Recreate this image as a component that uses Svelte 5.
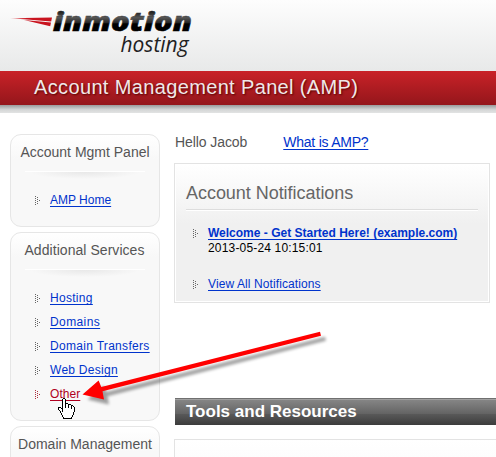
<script>
  const services = [
    { name: 'Hosting', track: 0.3 },
    { name: 'Domains', track: 0.4 },
    { name: 'Domain Transfers', track: 0.31 },
    { name: 'Web Design', track: 0.27 },
    { name: 'Other', track: 0.05 }
  ];
  const dots = [[0,0],[0,2],[0,4],[0,6],[0,8],[2,1],[2,3],[2,5],[2,7],[4,4]];

  // Hand pointer bitmap: X is outline, o is fill.
  const hand = [
    '.....XX..........',
    '....XooX.........',
    '....XooX.........',
    '....XooX.........',
    '....XooX.........',
    '....XooXXX.......',
    '....XooXooXXX....',
    '....XooXooXooXX..',
    '....XooXooXooXoX.',
    'XXX.XooXooXooXooX',
    'XooXXooooooooXooX',
    'XoooXoooooooooooX',
    '.XooXoooooooooooX',
    '..XoXoooooooooooX',
    '..XooooooooooooX.',
    '...XoooooooooooX.',
    '...XoooooooooooX.',
    '....XoooooooooX..',
    '....XoooooooooX..',
    '.....XoooooooX...',
    '.....XXXXXXXXX...'
  ];
  const pixels = hand.flatMap((row, y) => [...row].map((c, x) => ({ c, x, y }))).filter((p) => p.c !== '.');
</script>

{#snippet bullet(red)}
  <svg class="bullet" class:red width="5" height="9" viewBox="0 0 5 9" shape-rendering="crispEdges">
    {#each dots as [x, y]}<rect {x} {y} width="1" height="1" />{/each}
  </svg>
{/snippet}

<div class="page">
  <header>
    <svg class="logo" width="210" height="71" viewBox="0 0 210 71">
      <defs>
        <linearGradient id="ink" gradientUnits="userSpaceOnUse" x1="0" y1="10" x2="0" y2="32">
          <stop offset="0" stop-color="#111" /><stop offset=".35" stop-color="#555" />
          <stop offset=".6" stop-color="#222" /><stop offset=".62" stop-color="#000" />
        </linearGradient>
        <linearGradient id="streak" x1="0" x2="1" y1="0" y2="0">
          <stop offset="0" stop-color="#d9232b" stop-opacity=".35" /><stop offset=".4" stop-color="#c9141f" />
        </linearGradient>
      </defs>
      <path d="M10 18.2 52 17.6 51.2 21.4 27 19.6Z M24 20 51 22.6 50.2 26.2Z" fill="url(#streak)" />
      <text class="brand" x="53" y="31" textLength="139" lengthAdjust="spacingAndGlyphs">inmotion</text>
      <text class="sub" x="120.5" y="52" textLength="68" lengthAdjust="spacingAndGlyphs">hosting</text>
    </svg>
    <h1>Account Management Panel (AMP)</h1>
    <div class="shade"></div>
  </header>

  <div class="body">
    <nav>
      <section class="first">
        <h2>Account Mgmt Panel</h2>
        <div class="rule"></div>
        <ul><li>{@render bullet(false)}<a href="#home">AMP Home</a></li></ul>
      </section>
      <section class="second">
        <h2 class="nudge">Additional Services</h2>
        <div class="rule"></div>
        <ul>
          {#each services as { name, track }}
            <li>{@render bullet(name === 'Other')}<a href="#service" class:active={name === 'Other'} style:letter-spacing="{track}px">{name}</a></li>
          {/each}
        </ul>
      </section>
      <section class="third"><h2>Domain Management</h2></section>
    </nav>

    <main>
      <div class="hello"><span>Hello Jacob</span><a href="#amp">What is AMP?</a></div>
      <div class="panel">
        <h3>Account Notifications</h3>
        <div class="line"></div>
        <div class="note">
          {@render bullet(false)}
          <div><a class="bold" href="#welcome">Welcome - Get Started Here! (example.com)</a><div class="date">2013-05-24 10:15:01</div></div>
        </div>
        <div class="note all">{@render bullet(false)}<a href="#all">View All Notifications</a></div>
      </div>
      <h4>Tools and Resources</h4>
      <div class="tools"></div>
    </main>
  </div>

  <svg class="overlay" width="496" height="457" viewBox="0 0 496 457">
    <defs>
      <filter id="soft" x="-10%" y="-10%" width="120%" height="130%"><feGaussianBlur stdDeviation="1.4" /></filter>
      <path id="arrow" d="M320 331.7 321 335.7 102.5 391.2 104 399.4 82.5 394.5 98.6 380.4 101.3 387Z" />
    </defs>
    <use href="#arrow" x="5" y="5" fill="#000" opacity=".36" filter="url(#soft)" />
    <use href="#arrow" fill="red" />
    <g transform="translate(58 398)" shape-rendering="crispEdges">
      {#each pixels as { c, x, y }}<rect {x} {y} width="1" height="1" fill={c === 'X' ? '#000' : '#fff'} />{/each}
    </g>
  </svg>
</div>

<style>
  :global(body) { margin: 0; background: #fff; }
  .page { position: relative; width: 496px; height: 457px; overflow: hidden; font: 12px/14px "Liberation Sans", Arial, sans-serif; color: #000; }
  h1, h2, h3, h4, ul { margin: 0; padding: 0; font-weight: normal; }
  header { height: 113px; background: linear-gradient(#fdfdfd, #e8e9e9 71px); }
  .logo { display: block; }
  .brand { font: italic 800 26px "Open Sans", sans-serif; fill: url(#ink); stroke: url(#ink); stroke-width: .6px; }
  .sub { font: italic 400 22px "Open Sans", sans-serif; fill: #222; }
  h1 { height: 34px; box-sizing: border-box; padding-left: 34px; font-size: 20px; line-height: 33px; color: #f0e8e8; letter-spacing: .36px; text-shadow: 1px 1px 2px #500; background: linear-gradient(#c92228, #94161b); }
  .shade { height: 8px; background: linear-gradient(#999b9b, #d5d7d7 60%, #e2e3e3); }
  .body { display: flex; }
  nav { width: 150px; margin-left: 10px; padding-top: 21px; }
  section { box-sizing: border-box; width: 150px; border: 1px solid #e6e6e6; border-radius: 11px; background: linear-gradient(#fff, #f8f8f8 24px); }
  .first { height: 93px; }
  .second { height: 189px; margin-top: 5px; }
  .third { height: 93px; margin-top: 5px; }
  h2 { padding-top: 8px; height: 19px; line-height: 18px; font-size: 14px; text-align: center; color: #555; white-space: nowrap; }
  .nudge { letter-spacing: .05px; padding-right: 1px; }
  .rule { height: 8px; margin: 9px 14px 0; background: radial-gradient(ellipse 55px 7px at 50% 0, #e8e8e8, #f8f8f800); border-top: 1px solid #fff; }
  ul { list-style: none; padding-top: 8px; }
  li { display: flex; align-items: center; height: 24px; padding-left: 24px; white-space: nowrap; }
  .bullet { flex: none; margin-right: 10px; fill: #666; }
  .bullet.red { fill: #b03040; }
  a { color: #0033cc; text-decoration: underline; text-underline-offset: 1.5px; text-decoration-thickness: 1px; text-decoration-skip-ink: none; }
  .active { color: #b00020; }
  main { width: 322px; margin-left: 14px; }
  .hello { display: flex; gap: 36px; height: 16px; padding: 21px 0 13px 1px; font-size: 14px; line-height: 16px; color: #555; }
  .hello span { letter-spacing: -.08px; }
  .hello a { letter-spacing: -.24px; }
  .panel { box-sizing: border-box; width: 316px; height: 140px; border: 1px solid #e3e3e3; box-shadow: inset 0 0 0 1px #fff; background: linear-gradient(#fff, #f0f0f0 60px); }
  h3 { padding: 18px 0 0 11px; height: 22px; font-size: 18px; line-height: 22px; letter-spacing: -.04px; color: #666; }
  .line { height: 1px; margin: 5px 11px 0; background: #ddd; border-bottom: 1px solid #fff; }
  .note { display: flex; padding: 15px 0 0 18px; line-height: 15px; }
  .note .bullet { margin-top: 3px; }
  .note.all { padding-top: 21px; letter-spacing: .1px; }
  .date { letter-spacing: .17px; }
  .bold { font-weight: bold; }
  h4 { height: 27px; margin: 95px 0 0 1px; box-sizing: border-box; padding-left: 11px; border-top: 1px solid #707070; background: linear-gradient(#a0a0a0 1px, #858585 1px, #636363 15px, #595959 15px, #3c3c3c); color: #fff; font-size: 17px; line-height: 25px; font-weight: bold; }
  .tools { width: 340px; height: 60px; margin-top: 14px; border: 1px solid #e3e3e3; background: linear-gradient(#fff, #f8f8f8); }
  .overlay { position: absolute; inset: 0; pointer-events: none; }
</style>
